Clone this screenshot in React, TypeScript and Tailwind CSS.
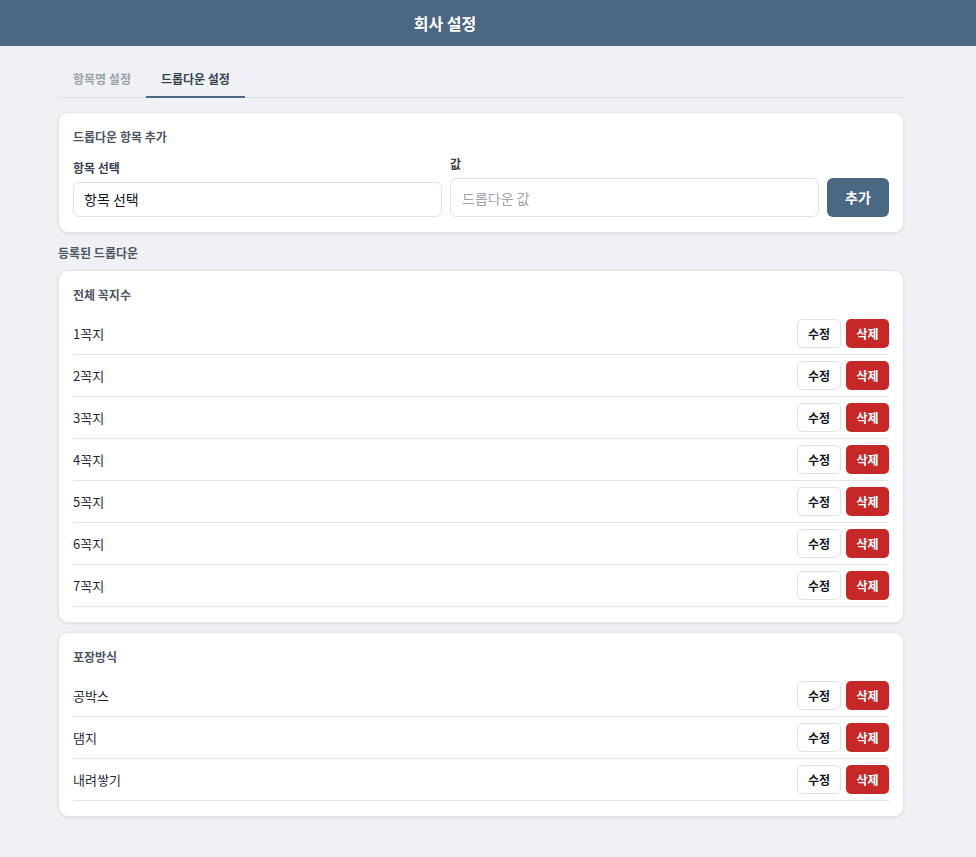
import React from "react";

const font = { fontFamily: '"Noto Sans CJK KR", "Noto Sans", sans-serif' };

function Row({ label }: { label: string }) {
  return (
    <div className="flex items-center justify-between border-b border-[#e2e4e8] py-[6px]">
      <span className="text-[13px] text-[#1f2937]">{label}</span>
      <div className="flex gap-[5px]">
        <button className="h-[29px] w-[44px] rounded-[5px] border border-[#dfe2e7] bg-white text-[12px] font-bold text-[#111827]">
          수정
        </button>
        <button className="h-[29px] w-[43px] rounded-[5px] bg-[#c62828] text-[12px] font-bold text-white">
          삭제
        </button>
      </div>
    </div>
  );
}

function Group({ title, items }: { title: string; items: string[] }) {
  return (
    <div className="rounded-[10px] border border-[#e3e5ea] bg-white px-[14px] pb-[15px] pt-[15px] shadow-[0_1px_3px_rgba(0,0,0,0.08)]">
      <div className="mb-[9px] text-[12px] font-bold leading-[18px] text-[#4b5563]">{title}</div>
      {items.map((i) => (
        <Row key={i} label={i} />
      ))}
    </div>
  );
}

export default function App() {
  return (
    <div style={font} className="min-h-[857px] bg-[#eff1f5] pb-[40px]">
      <div className="flex h-[46px] items-center justify-center bg-[#4a6784] pr-[86px]">
        <span className="text-[16px] font-bold text-white">회사 설정</span>
      </div>
      <div className="ml-[58px] w-[846px] pt-[16px]">
        <div className="flex border-b border-[#dcdfe4]">
          <div className="px-[15px] py-[8px] text-[12px] font-bold leading-[18px] text-[#9aa0a8]">항목명 설정</div>
          <div className="-mb-[1px] border-b-2 border-[#4a6784] px-[15px] py-[8px] text-[12px] font-bold leading-[18px] text-[#374151]">
            드롭다운 설정
          </div>
        </div>

        <div className="mt-[14px] rounded-[10px] border border-[#e3e5ea] bg-white px-[14px] pb-[15px] pt-[15px] shadow-[0_1px_3px_rgba(0,0,0,0.08)]">
          <div className="mb-[9px] text-[12px] font-bold leading-[18px] text-[#4b5563]">드롭다운 항목 추가</div>
          <div className="flex items-end gap-[8px]">
            <div className="flex-1">
              <div className="mb-[5px] text-[12px] font-bold leading-[18px] text-[#374151]">항목 선택</div>
              <div className="flex h-[35px] items-center rounded-[6px] border border-[#dfe2e7] bg-white px-[10px] text-[14px] text-[#111827]">
                항목 선택
              </div>
            </div>
            <div className="flex-1">
              <div className="mb-[5px] text-[12px] font-bold leading-[18px] text-[#374151]">값</div>
              <input
                placeholder="드롭다운 값"
                className="h-[39px] w-full rounded-[6px] border border-[#dfe2e7] bg-white px-[11px] text-[14px] text-[#111827] placeholder:text-[#a0a5ad] outline-none"
              />
            </div>
            <button className="h-[39px] w-[62px] rounded-[6px] bg-[#4a6784] text-[14px] font-bold text-white">
              추가
            </button>
          </div>
        </div>

        <div className="mb-[8px] mt-[11px] text-[12px] font-bold leading-[18px] text-[#4b5563]">등록된 드롭다운</div>

        <div className="flex flex-col gap-[9px]">
          <Group title="전체 꼭지수" items={["1꼭지", "2꼭지", "3꼭지", "4꼭지", "5꼭지", "6꼭지", "7꼭지"]} />
          <Group title="포장방식" items={["공박스", "댐지", "내려쌓기"]} />
        </div>
      </div>
    </div>
  );
}
